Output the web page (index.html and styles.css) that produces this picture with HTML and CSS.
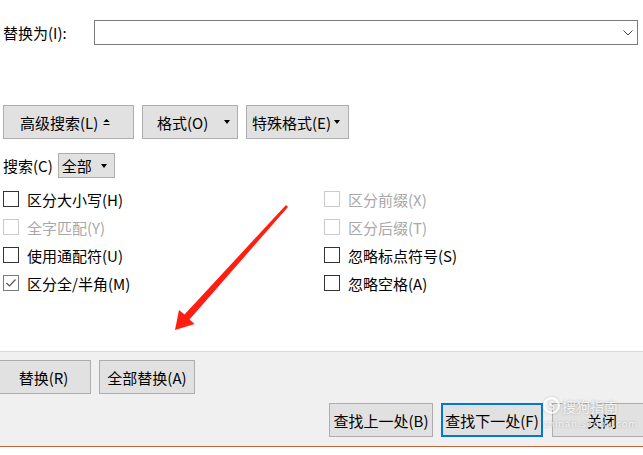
FILE: index.html
```html
<!DOCTYPE html>
<html>
<head>
  <title>查找和替换</title>
  <meta name="viewport" content="width=device-width, initial-scale=1.0">
  <link rel="stylesheet" href="styles.css">
</head>
<body>
  <div class="main">
    <div class="replace-row">
      <label class="replace-label">替换为(I):</label>
      <div class="combo">
        <svg class="chevron" width="10" height="6" viewBox="0 0 10 6"><path d="M0.5 0.5 L5 5 L9.5 0.5" fill="none" stroke="#444" stroke-width="1"/></svg>
      </div>
    </div>

    <div class="tool-row">
      <button class="btn btn-more">高级搜索(L)
        <svg width="7" height="8" viewBox="0 0 7 8"><path d="M0.5 4 L3.5 1 L6.5 4 Z" fill="#000"/><rect x="0.5" y="6" width="6" height="1" fill="#000"/></svg>
      </button>
      <button class="btn btn-format">格式(O) <span class="tri"></span></button>
      <button class="btn btn-special">特殊格式(E) <span class="tri"></span></button>
    </div>

    <div class="scope-row">
      <span>搜索(C)</span>
      <div class="select">全部 <span class="tri"></span></div>
    </div>

    <div class="options">
      <div class="opt"><span class="box"></span>区分大小写(H)</div>
      <div class="opt disabled"><span class="box"></span>区分前缀(X)</div>
      <div class="opt disabled"><span class="box"></span>全字匹配(Y)</div>
      <div class="opt disabled"><span class="box"></span>区分后缀(T)</div>
      <div class="opt"><span class="box"></span>使用通配符(U)</div>
      <div class="opt"><span class="box"></span>忽略标点符号(S)</div>
      <div class="opt checked">
        <span class="box"><svg width="12" height="12" viewBox="0 0 12 12"><path d="M1.5 6 L4.5 9 L10.5 2.5" fill="none" stroke="#555" stroke-width="1.2"/></svg></span>区分全/半角(M)
      </div>
      <div class="opt"><span class="box"></span>忽略空格(A)</div>
    </div>
  </div>

  <div class="footer">
    <div class="footer-row">
      <button class="btn btn-replace">替换(R)</button>
      <button class="btn btn-replace-all">全部替换(A)</button>
    </div>
    <div class="footer-row nav-row">
      <button class="btn btn-prev">查找上一处(B)</button>
      <button class="btn btn-next">查找下一处(F)</button>
      <button class="btn btn-close">关闭</button>
    </div>
  </div>

  <svg class="arrow" width="643" height="455" viewBox="0 0 643 455">
    <polygon points="175,330 179,310 184.5,314.5 286,205 288,207 189.5,319.5 194.5,324" fill="#ff1e10"/>
  </svg>

  <div class="watermark">
    <div class="wm-top"><span class="wm-logo">S</span>搜狗指南</div>
    <div class="wm-url">zhinan.sogou.com</div>
  </div>
</body>
</html>
```

FILE: styles.css
```css
body {
  margin: 0;
  width: 643px;
  height: 455px;
  overflow: hidden;
  position: relative;
  background: #fff;
  color: #000;
  font-family: "Noto Sans CJK SC", "Noto Sans", sans-serif;
  font-size: 15px;
  line-height: 1;
}

.main {
  height: 351px;
  box-sizing: border-box;
  padding-top: 20px;
}

.replace-row {
  display: flex;
  align-items: center;
  padding: 0 5px 0 3px;
  height: 25px;
}

.replace-label {
  width: 91px;
  flex: none;
}

.combo {
  flex: 1;
  height: 25px;
  box-sizing: border-box;
  border: 1px solid #7a7a7a;
  display: flex;
  align-items: center;
  justify-content: flex-end;
  padding-right: 4px;
}

.btn {
  box-sizing: border-box;
  height: 34px;
  flex: none;
  border: 1px solid #adadad;
  background: #e1e1e1;
  font-family: inherit;
  font-size: 15px;
  color: #000;
  padding: 0;
  margin: 0;
}

.tri {
  display: inline-block;
  width: 0;
  height: 0;
  border-left: 3.5px solid transparent;
  border-right: 3.5px solid transparent;
  border-top: 4px solid #000;
}

.tool-row {
  display: flex;
  gap: 8px;
  margin-top: 60px;
  padding-left: 3px;
}

.tool-row .btn {
  display: flex;
  align-items: center;
  justify-content: space-between;
}

.btn-more {
  width: 131px;
  padding: 0 23px 0 16px;
}

.btn-format {
  width: 96px;
  padding: 0 7px 0 14px;
}

.btn-special {
  width: 103px;
  padding: 0 8px 0 5px;
}

.scope-row {
  display: flex;
  align-items: center;
  gap: 5px;
  height: 25px;
  margin-top: 14px;
  padding-left: 3px;
}

.select {
  width: 57px;
  height: 25px;
  box-sizing: border-box;
  border: 1px solid #adadad;
  background: #e1e1e1;
  display: flex;
  align-items: center;
  justify-content: space-between;
  padding: 0 7px 0 3px;
}

.options {
  display: grid;
  grid-template-columns: 321px 1fr;
  grid-auto-rows: 28px;
  margin-top: 7px;
  padding-left: 3px;
}

.opt {
  display: flex;
  align-items: center;
  gap: 8px;
}

.box {
  width: 14px;
  height: 14px;
  border: 1px solid #333;
  flex: none;
  display: flex;
  align-items: center;
  justify-content: center;
}

.disabled {
  color: #a8a8a8;
}

.disabled .box {
  border-color: #cccccc;
}

.checked .box {
  border-color: #7a7a7a;
}

.footer {
  height: 96px;
  box-sizing: border-box;
  border-top: 1px solid #d9d9d9;
  border-bottom: 1px solid #c8643c;
  background: #f0f0f0;
  padding-top: 8px;
}

.footer-row {
  display: flex;
  gap: 8px;
}

.nav-row {
  margin-top: 9px;
  padding-left: 329px;
}

.btn-replace {
  width: 95px;
  margin-left: -4px;
}

.btn-replace-all {
  width: 96px;
}

.btn-prev {
  width: 104px;
}

.btn-next {
  width: 102px;
  border: 2px solid #0078d7;
}

.btn-close {
  width: 100px;
  margin-left: 1px;
}

.arrow {
  position: absolute;
  top: 0;
  left: 0;
  pointer-events: none;
}

.watermark {
  position: absolute;
  left: 543px;
  top: 397px;
  color: rgba(255, 255, 255, 0.85);
  text-shadow: 0 0 2px rgba(120, 120, 120, 0.6);
  pointer-events: none;
}

.wm-top {
  display: flex;
  align-items: center;
  gap: 2px;
  font-size: 14px;
}

.wm-logo {
  width: 13px;
  height: 13px;
  border: 2px solid rgba(255, 255, 255, 0.85);
  border-radius: 50%;
  font-size: 11px;
  font-weight: bold;
  display: flex;
  align-items: center;
  justify-content: center;
  box-shadow: 0 0 2px rgba(120, 120, 120, 0.5);
}

.wm-url {
  font-family: "DejaVu Sans", sans-serif;
  font-size: 9px;
  letter-spacing: 0.8px;
  margin-top: 6px;
}
```
